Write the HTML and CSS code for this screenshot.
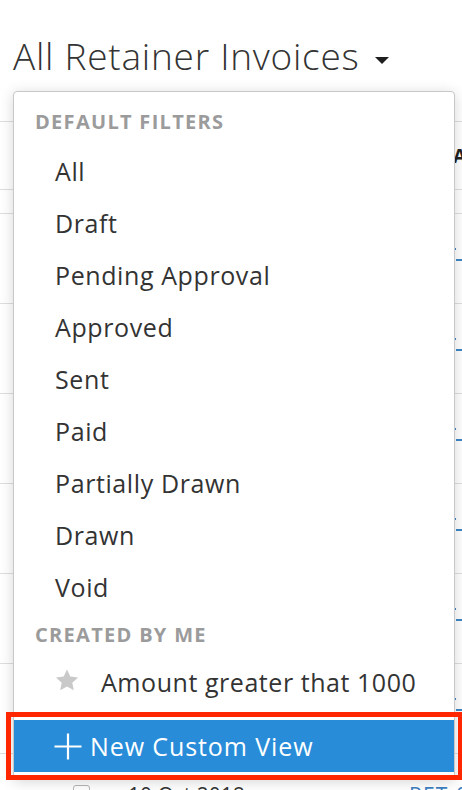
FILE: index.html
```html
<!DOCTYPE html>
<html>
<head>
<meta charset="utf-8">
<link rel="stylesheet" href="styles.css">
</head>
<body>
<div class="page">
  <header class="page-head">
    <h1 class="title">All Retainer Invoices</h1>
    <span class="caret"></span>
  </header>
  <div class="table">
    <div class="thead"><span></span><span class="th">AMOUNT</span></div>
    <div class="filter-row"></div>
    <div class="row"><span></span><span class="ref"><i class="m1"></i><i class="m2"></i></span></div>
    <div class="row"><span></span><span class="ref"><i class="m1"></i><i class="m2"></i></span></div>
    <div class="row"><span></span><span class="ref"><i class="m1"></i><i class="m2"></i></span></div>
    <div class="row"><span></span><span class="ref"><i class="m1"></i><i class="m2"></i></span></div>
    <div class="row"><span></span><span class="ref"><i class="m1"></i><i class="m2"></i></span></div>
    <div class="row"><span></span><span class="ref"><i class="m1"></i><i class="m2"></i></span></div>
    <div class="row last">
      <span class="check"></span>
      <span class="date">10 Oct 2018</span>
      <span class="reflink">RET-00007</span>
    </div>
  </div>

  <div class="dropdown">
    <div class="group-head">DEFAULT FILTERS</div>
    <ul class="items">
      <li>All</li>
      <li>Draft</li>
      <li>Pending Approval</li>
      <li>Approved</li>
      <li>Sent</li>
      <li>Paid</li>
      <li>Partially Drawn</li>
      <li>Drawn</li>
      <li>Void</li>
    </ul>
    <div class="group-head second">CREATED BY ME</div>
    <div class="custom-item">
      <svg class="star" width="24" height="23" viewBox="0 0 24 23"><path d="M12 0.5l3.3 7 7.7.9-5.7 5.3 1.5 7.6L12 17.5 5.2 21.3l1.5-7.6L1 8.4l7.7-.9z" fill="#c9c9c9"/></svg>
      <span>Amount greater that 1000</span>
    </div>
    <div class="new-view">
      <svg class="plus" width="28" height="27" viewBox="0 0 28 27"><path d="M14 0.5V26.5M0.5 13.5H27.5" stroke="#fff" stroke-width="2.2" fill="none"/></svg>
      <span>New Custom View</span>
    </div>
  </div>
  <div class="highlight"></div>
</div>
</body>
</html>
```
FILE: styles.css
```css
html, body {
  margin: 0;
  padding: 0;
}
body {
  width: 462px;
  height: 790px;
  overflow: hidden;
  background: #fff;
  font-family: "Open Sans", Lato, sans-serif;
  color: #333;
}
.page {
  position: relative;
  width: 462px;
  height: 790px;
  overflow: hidden;
}
.page-head {
  height: 121px;
  box-sizing: border-box;
  padding: 34px 0 0 13px;
  display: flex;
  align-items: flex-start;
}
.title {
  margin: 0;
  font-size: 37px;
  line-height: 44px;
  font-weight: 300;
  letter-spacing: 0.75px;
  color: #333;
  white-space: nowrap;
}
.caret {
  width: 0;
  height: 0;
  border-left: 7px solid transparent;
  border-right: 7px solid transparent;
  border-top: 7px solid #1e1e1e;
  margin: 23px 0 0 15px;
}
.table {
  border-top: 1px solid #dedede;
}
.thead {
  height: 67px;
  border-bottom: 1px solid #dedede;
  display: grid;
  grid-template-columns: 453px auto;
  align-items: center;
  white-space: nowrap;
}
.th {
  font-size: 19px;
  font-weight: 700;
  color: #222;
}
.filter-row {
  height: 23px;
  border-bottom: 1px solid #dedede;
}
.row {
  height: 89px;
  border-bottom: 1px solid #dedede;
  display: grid;
  grid-template-columns: 454px 8px;
}
.ref {
  display: flex;
  flex-direction: column;
  padding-top: 34px;
}
.ref i {
  display: block;
  background: #3d86c6;
  height: 2px;
}
.ref .m1 {
  width: 2px;
}
.ref .m2 {
  width: 6px;
  margin: 9px 0 0 2px;
}
.row.last {
  border-bottom: 0;
  display: grid;
  grid-template-columns: 55px 281px auto;
  align-items: start;
  padding: 31px 0 0 73px;
  box-sizing: border-box;
  white-space: nowrap;
}
.check {
  width: 15px;
  height: 15px;
  border: 1px solid #b5b5b5;
  border-radius: 3px;
}
.date {
  font-size: 21px;
  line-height: 20px;
  color: #333;
}
.reflink {
  font-size: 21px;
  line-height: 20px;
  color: #3d7fc3;
  letter-spacing: 1px;
}
.dropdown {
  position: absolute;
  left: 13px;
  top: 91px;
  width: 442px;
  height: 689px;
  box-sizing: border-box;
  background: #fff;
  border: 1px solid #c8c8c8;
  border-radius: 4px;
  box-shadow: 0 2px 14px rgba(0, 0, 0, 0.16);
  padding-top: 11px;
}
.group-head {
  height: 38px;
  line-height: 37px;
  padding-left: 21px;
  font-size: 20px;
  font-weight: 700;
  letter-spacing: 1.3px;
  color: #9b9b9b;
  margin-bottom: 4px;
  white-space: nowrap;
}
.group-head.second {
  margin: 3px 0 2px;
}
.items {
  list-style: none;
  margin: 0;
  padding: 0;
}
.items li {
  height: 52px;
  line-height: 52px;
  padding-left: 41px;
  font-size: 25px;
  letter-spacing: 0.6px;
  color: #333;
}
.custom-item {
  height: 52px;
  display: flex;
  align-items: center;
  padding-left: 41px;
  font-size: 25px;
  letter-spacing: 0.55px;
  color: #333;
}
.custom-item .star {
  margin: -4px 22px 0 0;
}
.new-view {
  margin-top: 12px;
  height: 52px;
  background: #288cd9;
  display: flex;
  align-items: center;
  padding-left: 40px;
  color: #fff;
  font-size: 25px;
  letter-spacing: 0.9px;
}
.new-view .plus {
  margin-right: 8px;
}
.highlight {
  position: absolute;
  left: 6px;
  top: 712px;
  width: 457px;
  height: 68px;
  box-sizing: border-box;
  border: 5px solid #ff2600;
}
```
